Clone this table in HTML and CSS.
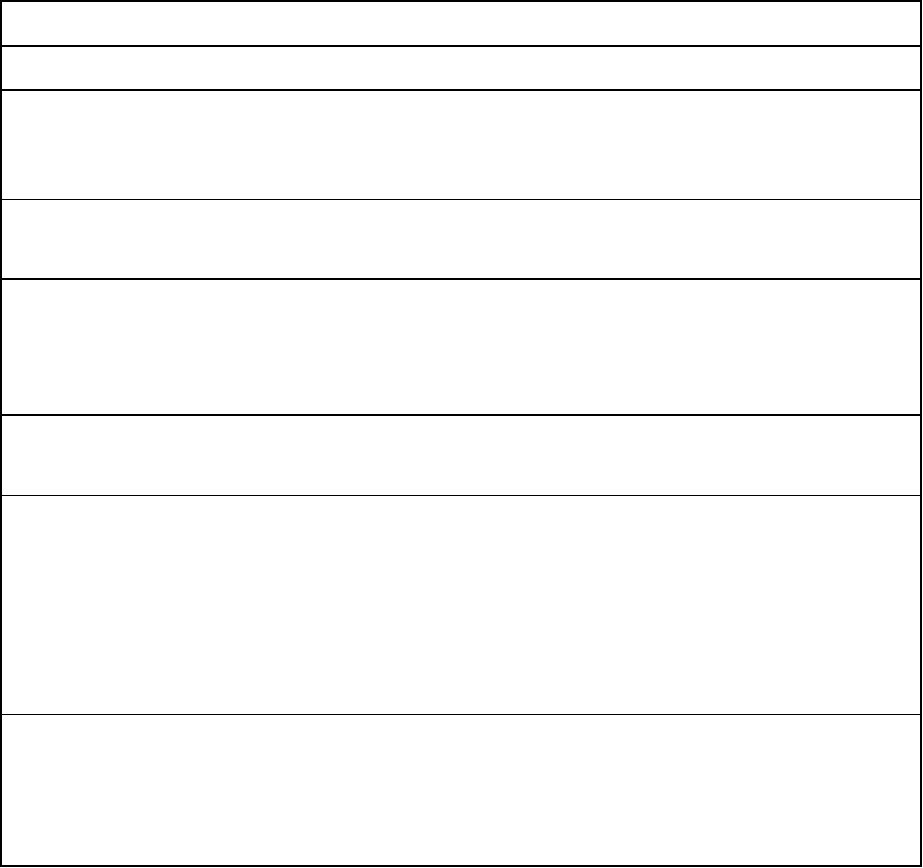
FILE: index.html
```html
<!DOCTYPE html>
<html>
<head>
<meta charset="utf-8">
<link rel="stylesheet" href="styles.css">
</head>
<body>
<div class="grid">
  <div class="row thick h1"></div>
  <div class="row thick h2"></div>
  <div class="row thin h3"></div>
  <div class="row thick h4"></div>
  <div class="row thick h5"></div>
  <div class="row thin h6"></div>
  <div class="row thin h7"></div>
  <div class="row last h8"></div>
</div>
</body>
</html>
```
FILE: styles.css
```css
html, body {
  margin: 0;
  padding: 0;
  background: #fff;
  font-family: "Liberation Sans", Arial, sans-serif;
}
.grid {
  width: 922px;
  box-sizing: border-box;
  border: 2px solid #000;
  display: flex;
  flex-direction: column;
}
.row { box-sizing: content-box; }
.thick { border-bottom: 2px solid #000; }
.thin { border-bottom: 1px solid #000; }
.h1 { height: 43px; }
.h2 { height: 42px; }
.h3 { height: 108px; }
.h4 { height: 78px; }
.h5 { height: 134px; }
.h6 { height: 79px; }
.h7 { height: 218px; }
.h8 { height: 150px; }
```
